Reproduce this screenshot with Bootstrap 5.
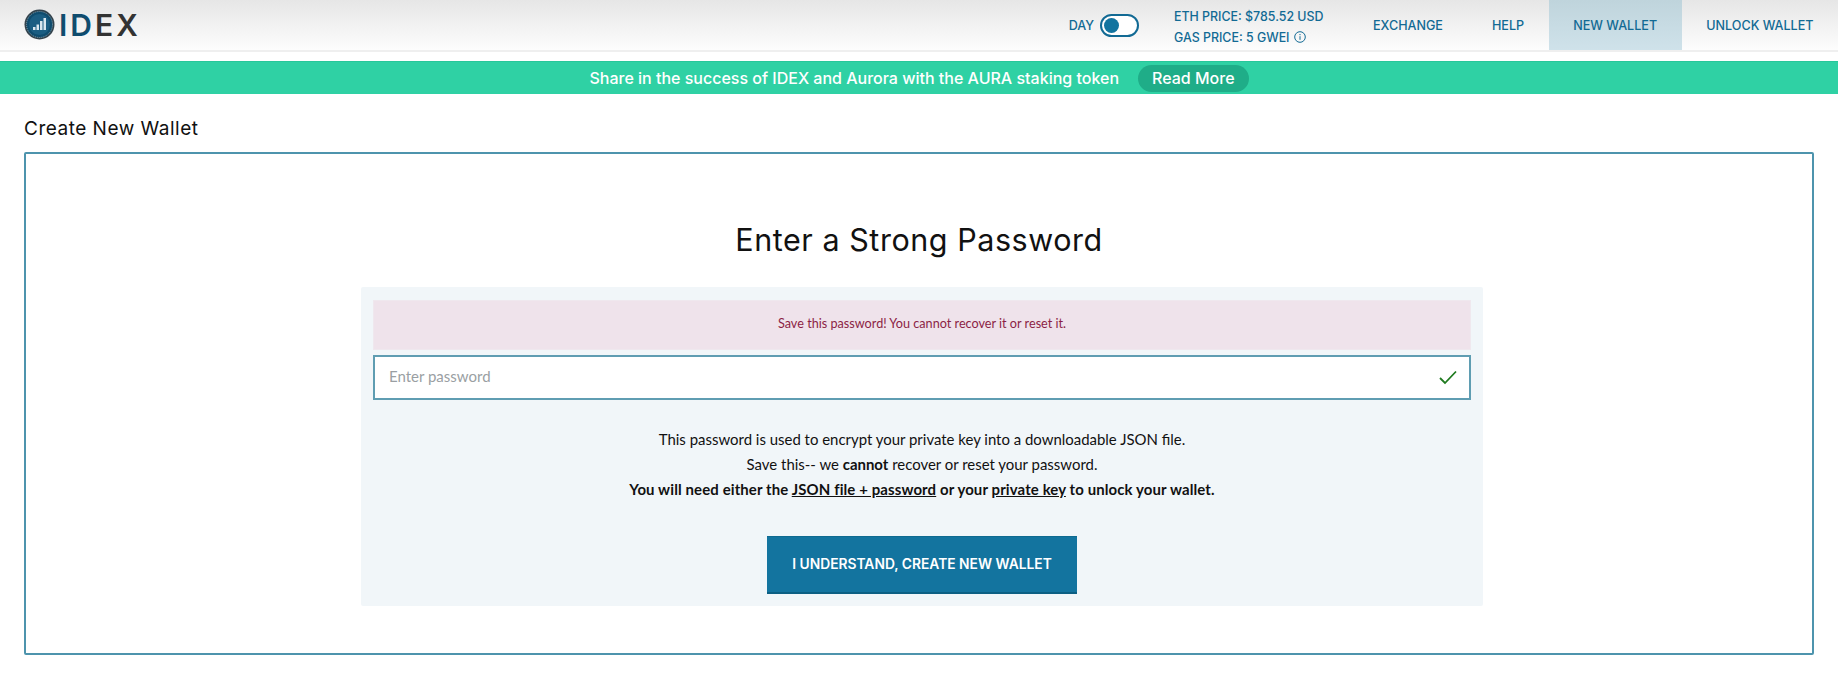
<!DOCTYPE html>
<html lang="en">
<head>
    <meta charset="UTF-8">
    <meta name="viewport" content="width=device-width, initial-scale=1.0">
    <title>IDEX - Create New Wallet</title>
    <link href="https://cdn.jsdelivr.net/npm/bootstrap@5.3.3/dist/css/bootstrap.min.css" rel="stylesheet">
    <style>
        body {
            background-color: #fff;
            font-family: 'Lato', 'Liberation Sans', sans-serif;
            color: #111;
        }

        .top-bar {
            height: 52px;
            background: linear-gradient(#e6e6e6, #fdfdfd);
            border-bottom: 2px solid #efefef;
            padding: 0;
        }

        .logo-link {
            margin-left: 24px;
            margin-top: 9px;
            gap: 4px;
        }

        .logo-text {
            font-family: 'Inter', sans-serif;
            font-size: 30px;
            font-weight: 600;
            line-height: 1;
            letter-spacing: 3px;
            color: #333;
        }

        .logo-text span {
            color: #0f4c6e;
        }

        .top-text {
            font-family: 'Inter', sans-serif;
            font-size: 12.6px;
            font-weight: 500;
            color: #126a94;
            white-space: nowrap;
        }

        .day-label {
            margin-top: 2px;
            margin-right: 6px;
        }

        .day-toggle {
            width: 39px;
            height: 23px;
            border: 2px solid #126a94;
            border-radius: 12px;
            padding: 2px;
            background: #fff;
        }

        .day-knob {
            width: 15px;
            height: 15px;
            border-radius: 50%;
            background: #13749f;
        }

        .price-block {
            font-size: 12.4px;
            line-height: 21px;
            margin-left: 35px;
            margin-right: 25px;
            padding-top: 3px;
        }

        .top-bar .nav-link {
            height: 50px;
            padding: 2px 24.5px 0;
            display: flex;
            align-items: center;
        }

        .top-bar .nav-link.active {
            background: linear-gradient(#bfd4dc, #cfe2ea);
            color: #126a94;
        }

        .promo-strip {
            margin-top: 9px;
            height: 33px;
            background-color: #2fd1a4;
            border-top: 1px solid #27c79a;
            color: #fff;
            font-family: 'Inter', sans-serif;
            font-size: 16px;
            font-weight: 500;
        }

        .promo-strip > span {
            padding-bottom: 1px;
        }

        .promo-btn {
            background-color: #1fad88;
            color: #fff;
            border-radius: 14px;
            padding: 2px 14px;
            font-size: 16px;
            font-weight: 500;
            line-height: 23px;
            margin-left: 19px;
            border: 0;
        }

        .page-title {
            font-family: 'Inter', sans-serif;
            font-size: 19px;
            font-weight: 400;
            letter-spacing: 0.5px;
            margin: 24px 0 12px;
            line-height: 22px;
        }

        .wallet-box {
            height: 503px;
            border: 2px solid #4d94ad;
            border-radius: 2px;
            padding-top: 66px;
        }

        .wallet-box h2 {
            font-family: 'Inter', sans-serif;
            font-size: 30.5px;
            font-weight: 400;
            letter-spacing: 0.55px;
            line-height: 40px;
            margin-bottom: 27px;
        }

        .pass-panel {
            width: 1122px;
            height: 319px;
            margin-left: 6px;
            background-color: #f1f6f9;
            border-radius: 2px;
            padding: 13px 12px;
        }

        .pass-panel .alert {
            height: 50px;
            background-color: #efe3eb;
            color: #8c1f45;
            border: 1px solid #efe8ee;
            border-radius: 0;
            font-size: 12.65px;
            margin-bottom: 5px;
            padding: 0 0 2px;
        }

        .pass-input-wrap {
            height: 45px;
        }

        .pass-input-wrap .form-control {
            height: 45px;
            border: 2px solid #5f9db2;
            border-radius: 0;
            padding: 0 14px 3px;
            font-size: 15px;
        }

        .pass-input-wrap .form-control::placeholder {
            color: #9a9fa3;
        }

        .pass-check {
            position: absolute;
            right: 14px;
            top: 15px;
        }

        .pass-info {
            font-size: 14.95px;
            line-height: 25px;
            margin-top: 27px;
            margin-bottom: 34px;
        }

        .pass-info .fw-bold {
            letter-spacing: 0.12px;
        }

        .pass-info a {
            color: inherit;
        }

        .create-btn {
            width: 310px;
            height: 58px;
            background-color: #13749f;
            border: 0;
            border-top: 1px solid #0f6a90;
            border-bottom: 2px solid #0c5f83;
            border-radius: 0;
            color: #fff;
            font-family: 'Inter', sans-serif;
            font-size: 13.8px;
            font-weight: 600;
        }
    </style>
</head>
<body>
    <nav class="navbar top-bar d-flex justify-content-between align-items-start flex-nowrap">
        <a href="#" class="logo-link d-flex align-items-center text-decoration-none">
            <svg width="31" height="31" viewBox="0 0 31 31">
                <circle cx="15.5" cy="15.5" r="15" fill="#33434d"></circle>
                <circle cx="15.5" cy="15.5" r="13" fill="#0f4c6e" stroke="#8fb2c4" stroke-width="0.8" stroke-dasharray="1 1"></circle>
                <circle cx="15.5" cy="15.5" r="10.5" fill="#1a5d82"></circle>
                <path d="M9 21h2.5v-3H9zM12.500 21h2.500v-5.500h-2.500zM16 21h2.500v-9H16zM19.500 21H22V9h-2.500z" fill="#d8e6ee"></path>
            </svg>
            <span class="logo-text"><span>ID</span>EX</span>
        </a>
        <div class="d-flex align-items-center">
            <span class="top-text day-label">DAY</span>
            <div class="day-toggle"><div class="day-knob"></div></div>
            <div class="top-text price-block">
                <div>ETH PRICE: $785.52 USD</div>
                <div class="d-flex align-items-center gap-1">GAS PRICE: 5 GWEI
                    <svg width="12" height="12" viewBox="0 0 12 12" fill="none" stroke="#126a94">
                        <circle cx="6" cy="6" r="5.300"></circle>
                        <path d="M6 5.200v3.600M6 3v1.200"></path>
                    </svg>
                </div>
            </div>
            <ul class="nav flex-nowrap">
                <li class="nav-item"><a href="#" class="nav-link top-text">EXCHANGE</a></li>
                <li class="nav-item"><a href="#" class="nav-link top-text">HELP</a></li>
                <li class="nav-item"><a href="#" class="nav-link top-text active">NEW WALLET</a></li>
                <li class="nav-item"><a href="#" class="nav-link top-text">UNLOCK WALLET</a></li>
            </ul>
        </div>
    </nav>

    <div class="promo-strip d-flex justify-content-center align-items-center">
        <span>Share in the success of IDEX and Aurora with the AURA staking token</span>
        <button type="button" class="btn promo-btn">Read More</button>
    </div>

    <main class="mx-4">
        <h1 class="page-title">Create New Wallet</h1>
        <section class="wallet-box d-flex flex-column align-items-center">
            <h2 class="text-center">Enter a Strong Password</h2>
            <div class="pass-panel">
                <div class="alert d-flex justify-content-center align-items-center" role="alert">Save this password! You cannot recover it or reset it.</div>
                <div class="pass-input-wrap position-relative">
                    <input type="password" class="form-control" placeholder="Enter password">
                    <svg class="pass-check" width="18" height="15" viewBox="0 0 18 15" fill="none" stroke="#1f7a1f" stroke-width="1.800">
                        <path d="M1 8l5 5L17 1.500"></path>
                    </svg>
                </div>
                <div class="pass-info text-center">
                    <div>This password is used to encrypt your private key into a downloadable JSON file.</div>
                    <div>Save this-- we <strong>cannot</strong> recover or reset your password.</div>
                    <div class="fw-bold">You will need either the <a href="#">JSON file + password</a> or your <a href="#">private key</a> to unlock your wallet.</div>
                </div>
                <div class="text-center">
                    <button type="button" class="btn create-btn">I UNDERSTAND, CREATE NEW WALLET</button>
                </div>
            </div>
        </section>
    </main>

    <script src="https://cdn.jsdelivr.net/npm/bootstrap@5.3.3/dist/js/bootstrap.bundle.min.js"></script>
</body>
</html>
